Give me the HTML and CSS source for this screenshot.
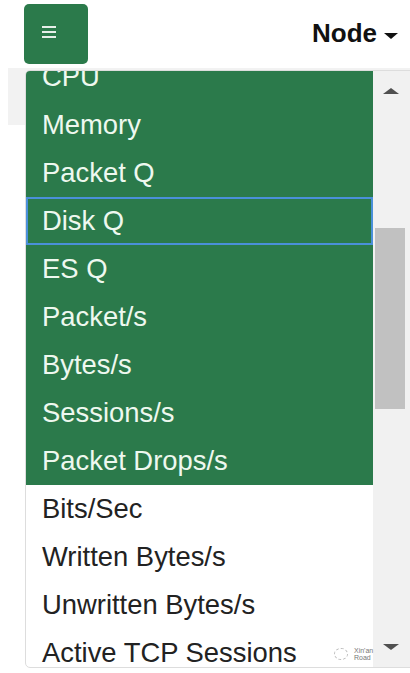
FILE: index.html
```html
<!DOCTYPE html>
<html lang="en">
<head>
    <meta charset="UTF-8">
    <meta name="viewport" content="width=device-width, initial-scale=1.0">
    <title>Node Stats</title>
    <link rel="stylesheet" href="styles.css">
</head>
<body>
    <div class="topbar">
        <button class="menu-btn" type="button" aria-label="Menu">
            <svg width="16" height="13" viewBox="0 0 16 13">
                <rect x="1" y="1" width="14" height="2" fill="#e6efe9"/>
                <rect x="1" y="6" width="14" height="2" fill="#e6efe9"/>
                <rect x="1" y="11" width="14" height="2" fill="#e6efe9"/>
            </svg>
        </button>
        <div class="node-select">Node <span class="caret"></span></div>
    </div>

    <div class="page">
        <div class="band"></div>
    </div>

    <div class="dropdown">
        <div class="list-wrap">
            <ul class="list">
                <li class="item on">CPU</li>
                <li class="item on">Memory</li>
                <li class="item on">Packet Q</li>
                <li class="item on focus">Disk Q</li>
                <li class="item on">ES Q</li>
                <li class="item on">Packet/s</li>
                <li class="item on">Bytes/s</li>
                <li class="item on">Sessions/s</li>
                <li class="item on">Packet Drops/s</li>
                <li class="item">Bits/Sec</li>
                <li class="item">Written Bytes/s</li>
                <li class="item">Unwritten Bytes/s</li>
                <li class="item">Active TCP Sessions</li>
            </ul>
        </div>
        <div class="scrollbar">
            <span class="arrow up"></span>
            <div class="thumb"></div>
            <span class="arrow down"></span>
        </div>
    </div>

    <div class="watermark">
        <span class="wm-icon"></span>
        <span class="wm-text">Xin'an<br>Road</span>
    </div>
</body>
</html>
```

FILE: styles.css
```css
body {
    font-family: "Liberation Sans", Arial, sans-serif;
    background-color: #fff;
    color: #222;
    margin: 0;
    overflow: hidden;
}
.topbar {
    display: flex;
    justify-content: space-between;
    align-items: center;
    padding: 4px 12px 0 24px;
    height: 60px;
}
.menu-btn {
    width: 64px;
    height: 60px;
    background-color: #2b7a4b;
    border: none;
    border-radius: 5px;
    padding: 0 0 6px 17px;
    display: flex;
    align-items: center;
    justify-content: flex-start;
}
.node-select {
    font-size: 26px;
    font-weight: bold;
    color: #111;
    display: flex;
    align-items: center;
    gap: 7px;
    margin-top: -2px;
}
.caret {
    width: 0;
    height: 0;
    border-left: 7px solid transparent;
    border-right: 7px solid transparent;
    border-top: 6px solid #111;
    margin-top: 6px;
}
.page {
    padding: 4px 0 0 8px;
}
.band {
    height: 57px;
    background-color: #f2f2f2;
}
.dropdown {
    position: absolute;
    left: 25px;
    top: 70px;
    width: 392px;
    height: 596px;
    display: flex;
    background-color: #fff;
    border: 1px solid #ddd;
    border-radius: 5px;
    overflow: hidden;
}
.list-wrap {
    width: 347px;
    overflow: hidden;
}
.list {
    list-style: none;
    margin: -18px 0 0 0;
    padding: 0;
}
.item {
    height: 48px;
    line-height: 48px;
    padding-left: 16px;
    font-size: 27.4px;
    color: #222;
    white-space: nowrap;
}
.item.on {
    background-color: #2b7a4b;
    color: #eef8ef;
}
.item.focus {
    box-shadow: inset 0 0 0 2px #4a90d9;
}
.scrollbar {
    width: 38px;
    background-color: #f1f1f1;
    position: relative;
}
.thumb {
    position: absolute;
    left: 2px;
    top: 157px;
    width: 30px;
    height: 181px;
    background-color: #c1c1c1;
}
.arrow {
    position: absolute;
    left: 10px;
    width: 0;
    height: 0;
    border-left: 8px solid transparent;
    border-right: 8px solid transparent;
}
.arrow.up {
    top: 17px;
    border-bottom: 6px solid #505050;
}
.arrow.down {
    top: 573px;
    border-top: 6px solid #505050;
}
.watermark {
    position: absolute;
    left: 334px;
    top: 647px;
    display: flex;
    align-items: center;
    gap: 6px;
    color: #777;
}
.wm-icon {
    width: 12px;
    height: 10px;
    border: 1px dashed #bbb;
    border-radius: 50%;
}
.wm-text {
    font-size: 7px;
    line-height: 7px;
}
```
